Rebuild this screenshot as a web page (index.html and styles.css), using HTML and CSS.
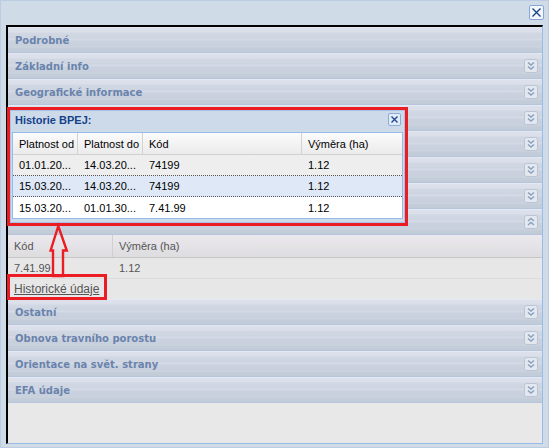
FILE: index.html
```html
<!DOCTYPE html>
<html lang="cs">
<head>
<meta charset="utf-8">
<title>Podrobné</title>
<link rel="stylesheet" href="styles.css">
</head>
<body>
<div class="window">
  <div class="toolbar">
    <span class="tool-close" title="Zavřít">
      <svg width="15" height="15" viewBox="0 0 15 15"><rect x="0.5" y="0.5" width="14" height="14" rx="1.5" fill="#f3f7fc" stroke="#86a6d4"/><path d="M3.5 3.5 L11.5 11.5 M11.5 3.5 L3.5 11.5" stroke="#163f86" stroke-width="1.3"/></svg>
    </span>
  </div>
  <div class="panel">
    <div class="hd"><span>Podrobné</span></div>
    <div class="hd"><span>Základní info</span><svg class="tg" viewBox="0 0 14 14"><rect x="0.5" y="0.5" width="13" height="13" rx="2" fill="#e3e8ef" stroke="#b9c5d4"/><path d="M4 3.5 L7 6 L10 3.5 M4 7.5 L7 10 L10 7.5" fill="none" stroke="#8aa0bd" stroke-width="1.4"/></svg></div>
    <div class="hd"><span>Geografické informace</span><svg class="tg" viewBox="0 0 14 14"><rect x="0.5" y="0.5" width="13" height="13" rx="2" fill="#e3e8ef" stroke="#b9c5d4"/><path d="M4 3.5 L7 6 L10 3.5 M4 7.5 L7 10 L10 7.5" fill="none" stroke="#8aa0bd" stroke-width="1.4"/></svg></div>
    <div class="hd"><span></span><svg class="tg" viewBox="0 0 14 14"><rect x="0.5" y="0.5" width="13" height="13" rx="2" fill="#e3e8ef" stroke="#b9c5d4"/><path d="M4 3.5 L7 6 L10 3.5 M4 7.5 L7 10 L10 7.5" fill="none" stroke="#8aa0bd" stroke-width="1.4"/></svg></div>
    <div class="hd"><span></span><svg class="tg" viewBox="0 0 14 14"><rect x="0.5" y="0.5" width="13" height="13" rx="2" fill="#e3e8ef" stroke="#b9c5d4"/><path d="M4 3.5 L7 6 L10 3.5 M4 7.5 L7 10 L10 7.5" fill="none" stroke="#8aa0bd" stroke-width="1.4"/></svg></div>
    <div class="hd"><span></span><svg class="tg" viewBox="0 0 14 14"><rect x="0.5" y="0.5" width="13" height="13" rx="2" fill="#e3e8ef" stroke="#b9c5d4"/><path d="M4 3.5 L7 6 L10 3.5 M4 7.5 L7 10 L10 7.5" fill="none" stroke="#8aa0bd" stroke-width="1.4"/></svg></div>
    <div class="hd"><span></span><svg class="tg" viewBox="0 0 14 14"><rect x="0.5" y="0.5" width="13" height="13" rx="2" fill="#e3e8ef" stroke="#b9c5d4"/><path d="M4 3.5 L7 6 L10 3.5 M4 7.5 L7 10 L10 7.5" fill="none" stroke="#8aa0bd" stroke-width="1.4"/></svg></div>
    <div class="hd"><span></span><svg class="tg" viewBox="0 0 14 14"><rect x="0.5" y="0.5" width="13" height="13" rx="2" fill="#e3e8ef" stroke="#b9c5d4"/><path d="M4 6 L7 3.5 L10 6 M4 10 L7 7.5 L10 10" fill="none" stroke="#8aa0bd" stroke-width="1.4"/></svg></div>
    <div class="sec-body">
      <div class="sg-head">
        <div class="sg-c1">Kód</div>
        <div class="sg-c2">Výměra (ha)</div>
      </div>
      <div class="sg-row">
        <div class="sg-c1">7.41.99</div>
        <div class="sg-c2">1.12</div>
      </div>
      <div class="sg-link"><a href="#">Historické údaje</a></div>
    </div>
    <div class="hd"><span>Ostatní</span><svg class="tg" viewBox="0 0 14 14"><rect x="0.5" y="0.5" width="13" height="13" rx="2" fill="#e3e8ef" stroke="#b9c5d4"/><path d="M4 3.5 L7 6 L10 3.5 M4 7.5 L7 10 L10 7.5" fill="none" stroke="#8aa0bd" stroke-width="1.4"/></svg></div>
    <div class="hd"><span>Obnova travního porostu</span><svg class="tg" viewBox="0 0 14 14"><rect x="0.5" y="0.5" width="13" height="13" rx="2" fill="#e3e8ef" stroke="#b9c5d4"/><path d="M4 3.5 L7 6 L10 3.5 M4 7.5 L7 10 L10 7.5" fill="none" stroke="#8aa0bd" stroke-width="1.4"/></svg></div>
    <div class="hd"><span>Orientace na svět. strany</span><svg class="tg" viewBox="0 0 14 14"><rect x="0.5" y="0.5" width="13" height="13" rx="2" fill="#e3e8ef" stroke="#b9c5d4"/><path d="M4 3.5 L7 6 L10 3.5 M4 7.5 L7 10 L10 7.5" fill="none" stroke="#8aa0bd" stroke-width="1.4"/></svg></div>
    <div class="hd"><span>EFA údaje</span><svg class="tg" viewBox="0 0 14 14"><rect x="0.5" y="0.5" width="13" height="13" rx="2" fill="#e3e8ef" stroke="#b9c5d4"/><path d="M4 3.5 L7 6 L10 3.5 M4 7.5 L7 10 L10 7.5" fill="none" stroke="#8aa0bd" stroke-width="1.4"/></svg></div>
  </div>

  <div class="annot-popup">
    <div class="popup">
      <div class="popup-title">
        <span>Historie BPEJ:</span>
        <svg class="popup-close" width="13" height="13" viewBox="0 0 13 13"><rect x="0.5" y="0.5" width="12" height="12" rx="1.5" fill="#e2ebf8" stroke="#8eabd8"/><path d="M3.5 3.5 L9.5 9.5 M9.5 3.5 L3.5 9.5" stroke="#1a4490" stroke-width="1.3"/></svg>
      </div>
      <div class="grid">
        <div class="g-head">
          <div class="gc w1">Platnost od</div>
          <div class="gc w2">Platnost do</div>
          <div class="gc w3">Kód</div>
          <div class="gc w4">Výměra (ha)</div>
        </div>
        <div class="g-row r-gray">
          <div class="gc w1">01.01.20...</div>
          <div class="gc w2">14.03.20...</div>
          <div class="gc w3">74199</div>
          <div class="gc w4">1.12</div>
        </div>
        <div class="g-row r-sel">
          <div class="gc w1">15.03.20...</div>
          <div class="gc w2">14.03.20...</div>
          <div class="gc w3">74199</div>
          <div class="gc w4">1.12</div>
        </div>
        <div class="g-row r-white">
          <div class="gc w1">15.03.20...</div>
          <div class="gc w2">01.01.30...</div>
          <div class="gc w3">7.41.99</div>
          <div class="gc w4">1.12</div>
        </div>
      </div>
    </div>
  </div>

  <svg class="annot-arrow" width="30" height="58" viewBox="44 220 30 58"><polygon points="58.3,226 50.6,250.5 53,250.5 53,276 63,276 63,250.5 66.8,250.5" fill="none" stroke="#ec1c24" stroke-width="2.4" stroke-linejoin="miter"/></svg>
  <div class="annot-link"></div>
</div>
</body>
</html>
```
FILE: styles.css
```css
* {
  box-sizing: border-box;
}

html,
body {
  margin: 0;
  padding: 0;
}

body {
  width: 549px;
  height: 448px;
  overflow: hidden;
  background: #d0dbe8;
  font-family: "Liberation Sans", Arial, sans-serif;
  font-size: 11px;
}

.window {
  position: relative;
  width: 549px;
  height: 448px;
  border: 1px solid #bccde3;
  background: #d0dbe8;
  display: flex;
  flex-direction: column;
}

.toolbar {
  height: 24px;
  flex: none;
  display: flex;
  justify-content: flex-end;
  align-items: flex-start;
  padding: 4px 4px 0 0;
}

.tool-close {
  display: block;
  width: 15px;
  height: 15px;
}

.tool-close svg {
  display: block;
}

.panel {
  margin: 0 5px;
  height: 419px;
  flex: none;
  border-top: 2px solid #000;
  border-left: 2px solid #000;
  border-right: 1px solid #99bbe8;
  border-bottom: 1px solid #99bbe8;
  background: #e8e8e8;
  display: flex;
  flex-direction: column;
}

.hd {
  height: 26px;
  flex: none;
  display: flex;
  align-items: center;
  justify-content: space-between;
  padding: 0 4px 0 7px;
  border-top: 1px solid #e4e8f0;
  border-bottom: 1px solid #b5c6dc;
  background: linear-gradient(to bottom,
    #dde1ec 0px, #dadfea 4px, #d1d8e4 5px, #cdd5e1 10px,
    #d6dce7 11px, #d2d9e4 12px, #c9d2de 13px, #c7d0dc 18px,
    #cdd4df 19px, #c4cdda 20px, #c2ccd9 24px);
  font-family: "DejaVu Sans", Verdana, sans-serif;
  font-weight: bold;
  font-size: 10px;
  color: #6a83ac;
}

.hd .tg {
  width: 14px;
  height: 14px;
  display: block;
  flex: none;
}

.sec-body {
  flex: none;
  background: #e7e7e7;
  color: #555;
}

.sg-head {
  display: flex;
  height: 23px;
  background: linear-gradient(to bottom, #ebe9ed, #dddcdf);
  border-bottom: 1px solid #c6c6c6;
}

.sg-row {
  display: flex;
  height: 21px;
  border-bottom: 1px solid #dcdcdc;
}

.sg-c1,
.sg-c2 {
  display: flex;
  align-items: center;
  padding-left: 6px;
}

.sg-c1 {
  width: 105px;
}

.sg-head .sg-c1 {
  border-right: 1px solid #d0d0d0;
}

.sg-c2 {
  flex: 1;
}

.sg-link {
  height: 20px;
  display: flex;
  align-items: center;
  padding-left: 6px;
}

.sg-link a {
  color: #555;
  text-decoration: underline;
  font-size: 12px;
}

/* Overlaid popup window with annotation frame */
.annot-popup {
  position: absolute;
  left: 6px;
  top: 106px;
  width: 401px;
  height: 119px;
  border: 3px solid #ec1c24;
}

.popup {
  height: 100%;
  background: #cddaea;
  border: 1px solid #a9c1e2;
  padding: 0 1px 3px 1px;
  display: flex;
  flex-direction: column;
}

.popup-title {
  height: 21px;
  flex: none;
  display: flex;
  justify-content: space-between;
  align-items: flex-start;
  padding: 2px 2px 0 3px;
}

.popup-title span {
  font-weight: bold;
  color: #15428b;
  line-height: 14px;
  padding-top: 0;
}

.popup-close {
  display: block;
}

.grid {
  flex: none;
  border: 1px solid #99bbe8;
  background: #fff;
}

.g-head {
  display: flex;
  height: 22px;
  background: linear-gradient(to bottom, #fbfbfb, #ebebeb);
  border-bottom: 1px solid #d0d0d0;
}

.g-row {
  display: flex;
  height: 21px;
}

.gc {
  display: flex;
  align-items: center;
  padding-left: 6px;
  white-space: nowrap;
  overflow: hidden;
  color: #000;
}

.g-head .gc {
  border-right: 1px solid #d3d3d3;
}

.g-head .w4 {
  border-right: none;
}

.w1 { width: 65px; }
.w2 { width: 65px; }
.w3 { width: 159px; }
.w4 { flex: 1; }

.r-gray {
  background: #eeeeee;
  border-bottom: 1px dotted #555;
}

.r-sel {
  background: #dfe8f6;
  border-bottom: 1px dotted #555;
}

.r-white {
  background: #fff;
}

.annot-arrow {
  position: absolute;
  left: 43px;
  top: 219px;
}

.annot-link {
  position: absolute;
  left: 6px;
  top: 273px;
  width: 100px;
  height: 26px;
  border: 3px solid #ec1c24;
}
```
